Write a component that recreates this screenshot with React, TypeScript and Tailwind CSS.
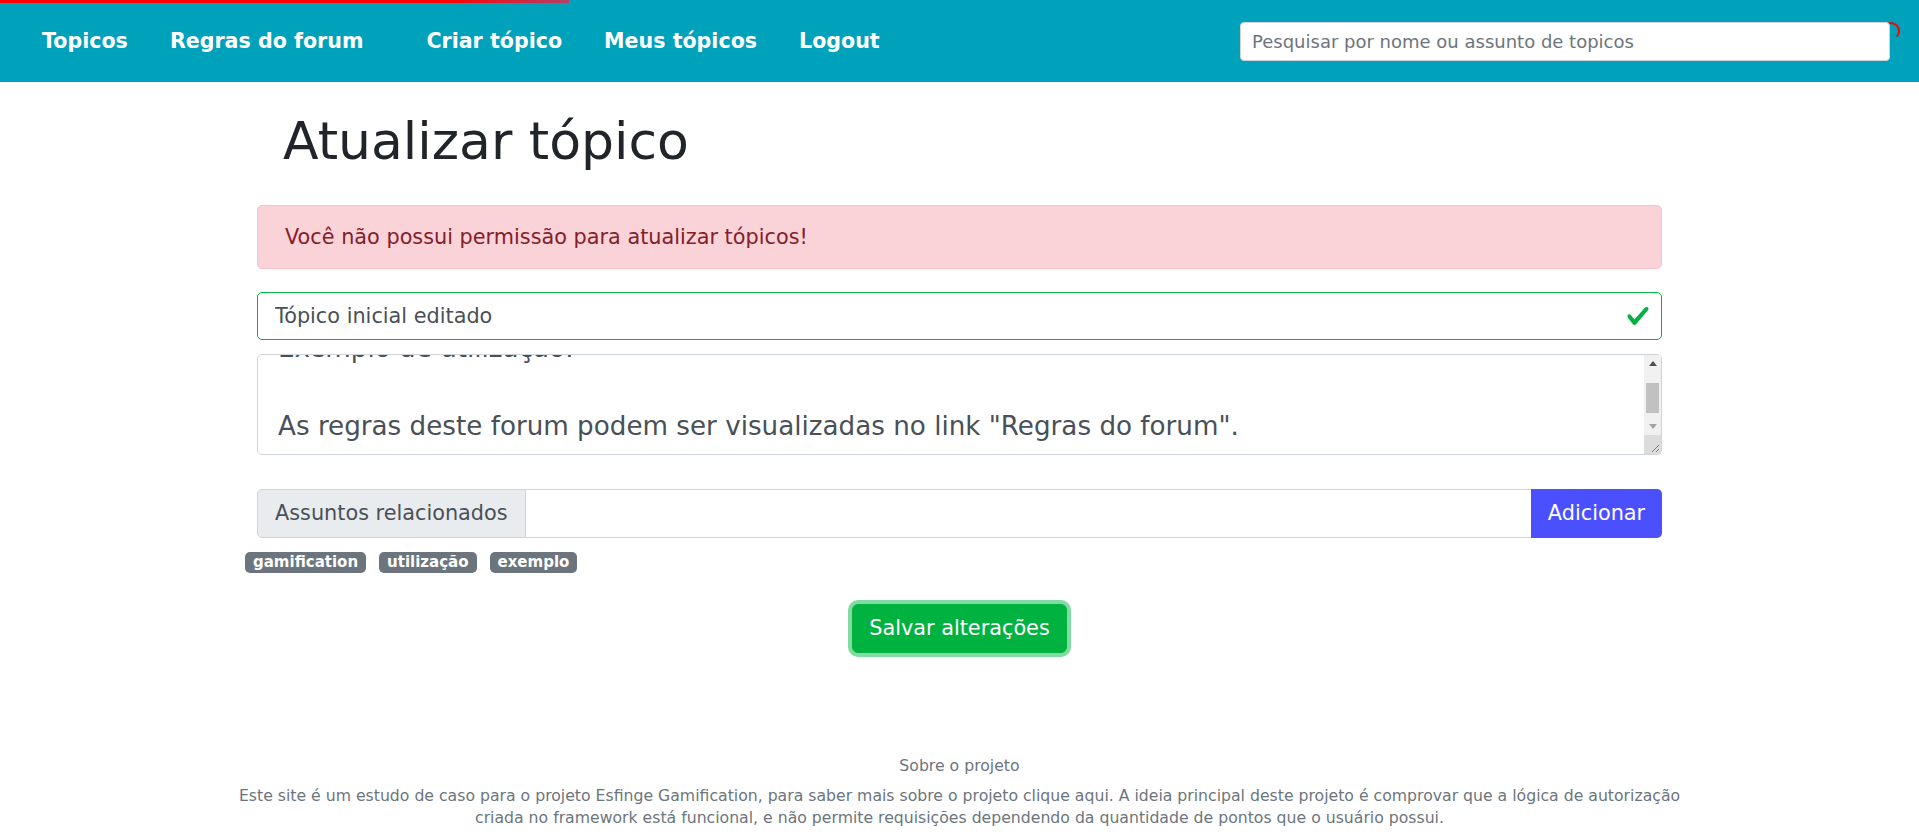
import { useEffect, useRef } from "react";

const topicText = [
  "Este é o tópico inicial do forum, criado para demonstração.",
  "Exemplo de utilização:",
  "",
  'As regras deste forum podem ser visualizadas no link "Regras do forum".',
].join("\n");

const tags = ["gamification", "utilização", "exemplo"];

function Navbar() {
  return (
    <nav className="relative flex h-[82px] items-center bg-[#00a1ba] pl-[21px] pr-[29px] pt-[1px]">
      {/* page loading bar */}
      <div className="absolute left-0 top-0 h-[3px] w-[569px] bg-[linear-gradient(to_right,#ff0000_78%,#b4406a)]" />
      <a className="px-[21px] text-[20.6px] font-bold text-white">Topicos</a>
      <a className="mr-[21px] px-[21px] text-[20.6px] font-bold text-white">Regras do forum</a>
      <a className="px-[21px] text-[20.6px] font-bold text-white">Criar tópico</a>
      <a className="px-[21px] text-[20.6px] font-bold text-white">Meus tópicos</a>
      <a className="px-[21px] text-[20.6px] font-bold text-white">Logout</a>

      <div className="relative ml-auto -mt-[1px]">
        <div className="absolute left-[642px] top-0 h-[18px] w-[18px] rounded-full border-2 border-transparent border-r-[#ff0000] border-t-[#ff0000]" />
        <input
          className="relative z-10 h-[39px] w-[650px] rounded-[4px] border border-[#ced4da] bg-white px-[11px] text-[18px] text-[#495057] outline-none placeholder:text-[#6c757d]"
          placeholder="Pesquisar por nome ou assunto de topicos"
        />
      </div>
    </nav>
  );
}

function CheckIcon() {
  return (
    <svg viewBox="0 0 8 8" className="h-[24px] w-[24px]">
      <path
        fill="#00b341"
        d="M2.3 6.73L.6 4.53c-.4-1.04.46-1.4 1.1-.8l1.1 1.4 3.4-3.8c.6-.63 1.6-.27 1.2.7l-4 4.6c-.43.5-.8.4-1.1.1z"
      />
    </svg>
  );
}

// classic scrollbar drawn over the textarea's right edge
function FakeScrollbar() {
  return (
    <div className="absolute bottom-[1px] right-[1px] top-[1px] flex w-[17px] flex-col bg-[#f1f1f1]">
      <div className="flex h-[17px] items-center justify-center">
        <svg viewBox="0 0 8 5" className="h-[5px] w-[8px]">
          <path d="M0 5 L4 0 L8 5 Z" fill="#505050" />
        </svg>
      </div>
      <div className="flex-1 px-[2px] pt-[11px]">
        <div className="h-[30px] bg-[#c1c1c1]" />
      </div>
      <div className="flex h-[17px] items-center justify-center">
        <svg viewBox="0 0 8 5" className="h-[5px] w-[8px]">
          <path d="M0 0 L8 0 L4 5 Z" fill="#a3a3a3" />
        </svg>
      </div>
      <div className="relative h-[19px] bg-[#dcdcdc]">
        <svg viewBox="0 0 17 19" className="absolute inset-0 h-full w-full">
          <path d="M8 17 L15 10 M12 17 L15 14" stroke="#7a7a7a" strokeWidth="1" />
        </svg>
      </div>
    </div>
  );
}

export default function App() {
  const areaRef = useRef<HTMLTextAreaElement>(null);

  useEffect(() => {
    if (areaRef.current) areaRef.current.scrollTop = areaRef.current.scrollHeight;
  }, []);

  return (
    <div className="min-h-[835px] bg-white font-['DejaVu_Sans',sans-serif] text-[#212529]">
      <Navbar />

      <main className="mx-auto w-[1405px]">
        <h1 className="mt-[28px] pl-[26px] text-[52px] font-normal leading-[1.2] text-[#212529]">
          Atualizar tópico
        </h1>

        <div className="mt-[33px] rounded-[5px] border border-[#f5c2c7] bg-[#f9d3d8] px-[27px] py-4 text-[20.8px] leading-[30px] text-[#842029]">
          Você não possui permissão para atualizar tópicos!
        </div>

        <div className="relative mt-[23px]">
          <input
            className="h-[48px] w-full rounded-[5px] border border-[#00b341] bg-white pl-[17px] pr-[50px] text-[20.8px] text-[#495057] outline-none"
            defaultValue="Tópico inicial editado"
          />
          <div className="absolute right-[12px] top-[12px]">
            <CheckIcon />
          </div>
        </div>

        <div className="relative mt-[14px]">
          <textarea
            ref={areaRef}
            className="block h-[101px] w-full resize-none overflow-hidden rounded-[5px] border border-[#ced4da] bg-white pb-[8px] pl-[20px] pr-[40px] pt-[10px] text-[26.2px] leading-[39px] text-[#495057] outline-none"
            defaultValue={topicText}
          />
          <FakeScrollbar />
        </div>

        <div className="mt-[34px] flex h-[49px]">
          <span className="flex items-center rounded-l-[5px] border border-[#ced4da] bg-[#e9ecef] px-[17px] text-[20.8px] text-[#495057]">
            Assuntos relacionados
          </span>
          <input className="min-w-0 flex-1 border-y border-[#ced4da] bg-white px-[17px] text-[20.8px] outline-none" />
          <button className="w-[131px] rounded-r-[5px] bg-[#4b50ff] text-[20.8px] text-white">Adicionar</button>
        </div>

        <div className="-ml-[12px] mt-[14px] flex gap-[13px]">
          {tags.map((t) => (
            <span
              key={t}
              className="rounded-[5px] bg-[#6c757d] px-[8px] py-[3px] text-[15px] font-bold leading-[15px] text-white"
            >
              {t}
            </span>
          ))}
        </div>

        <div className="mt-[31px] flex justify-center">
          <button className="h-[49px] rounded-[6px] border border-[#00b341] bg-[#00b341] px-4 text-[20.8px] text-white ring-4 ring-[#82dba3]">
            Salvar alterações
          </button>
        </div>
      </main>

      <footer className="mx-auto mt-[102px] w-[1460px] text-center text-[15.7px] leading-[22px] text-[#6c757d]">
        <p>Sobre o projeto</p>
        <p className="mt-[7.5px]">
          Este site é um estudo de caso para o projeto Esfinge Gamification, para saber mais sobre o projeto clique
          aqui. A ideia principal deste projeto é comprovar que a lógica de autorização criada no framework está
          funcional, e não permite requisições dependendo da quantidade de pontos que o usuário possui.
        </p>
      </footer>
    </div>
  );
}
